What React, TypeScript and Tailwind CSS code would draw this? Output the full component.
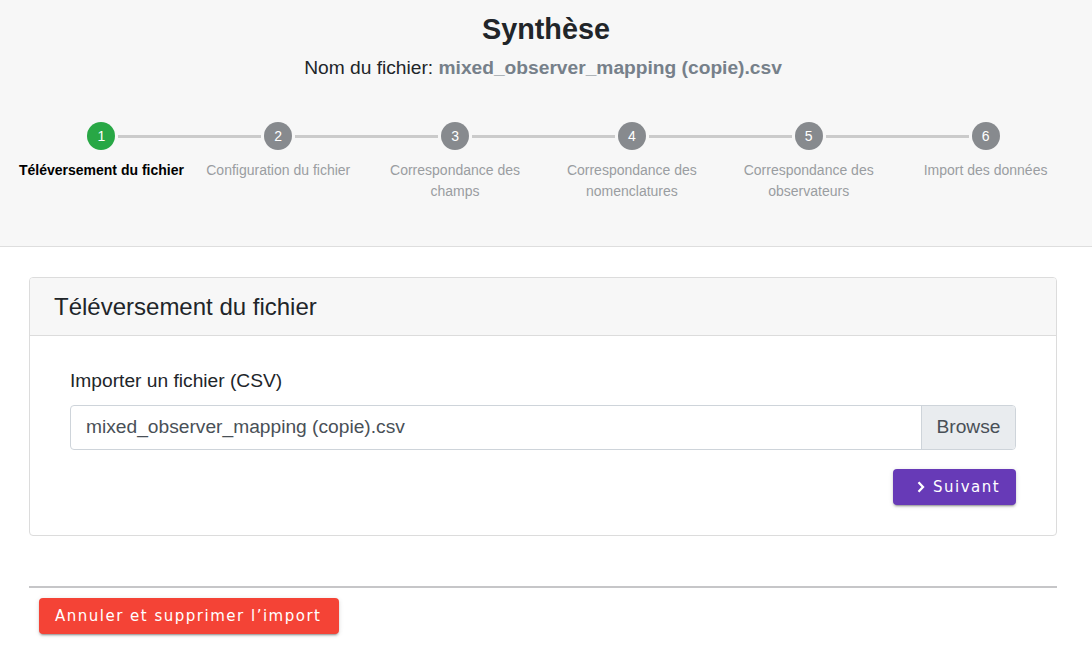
import React from "react";

const steps = [
  "Téléversement du fichier",
  "Configuration du fichier",
  "Correspondance des champs",
  "Correspondance des nomenclatures",
  "Correspondance des observateurs",
  "Import des données",
];

export default function App() {
  return (
    <div className="min-h-[658px] bg-white text-[#212529] [font-family:'Liberation_Sans',Arial,sans-serif]">
      <div className="bg-[#f7f7f7] border-b border-[#dedede] h-[247px] pt-[12px]">
        <h1 className="text-center font-bold text-[28.8px] leading-[1.2]">Synthèse</h1>
        <p className="text-center text-[19.2px] leading-[1.5] mt-[7px] pr-[6px]">
          Nom du fichier: <span className="font-bold text-[#76808a]">mixed_observer_mapping (copie).csv</span>
        </p>
        <div className="ml-[13px] w-[1061px] flex mt-[40px]">
          {steps.map((s, i) => (
            <div key={i} className="flex-1 flex flex-col items-center relative">
              {i > 0 && (
                <div className="absolute top-[12.5px] right-[calc(50%+17px)] left-[calc(-50%+17px)] h-[3px] bg-[#cbcbcb]" />
              )}
              <div
                className={
                  "w-[28px] h-[28px] rounded-full flex items-center justify-center text-white text-[14px] " +
                  (i === 0 ? "bg-[#28a745]" : "bg-[#878a8e]")
                }
              >
                {i + 1}
              </div>
              <div
                className={
                  "mt-[10px] text-center text-[14px] leading-[21px] max-w-[170px] " +
                  (i === 0 ? "font-bold text-black" : "text-[#9a9da1]")
                }
              >
                {s}
              </div>
            </div>
          ))}
        </div>
      </div>

      <div className="ml-[29px] w-[1028px] mt-[30px] border border-[#dcdcdc] rounded-[4px] overflow-hidden">
        <div className="h-[58px] bg-[#f7f7f7] border-b border-[#dcdcdc] flex items-center px-[24px] pt-[1px]">
          <h2 className="text-[24px] leading-[1.2] text-[#212529]">Téléversement du fichier</h2>
        </div>
        <div className="px-[40px] pt-[31px] pb-[30px]">
          <label className="block text-[19.2px] leading-[1.5] text-[#212529]">Importer un fichier (CSV)</label>
          <div className="mt-[9px] flex h-[45px] border border-[#ced4da] rounded-[4px] overflow-hidden">
            <div className="flex-1 flex items-center px-[15px] pt-[1px] text-[19.2px] text-[#495057]">
              mixed_observer_mapping (copie).csv
            </div>
            <div className="w-[94px] bg-[#e9ecef] border-l border-[#ced4da] flex items-center justify-center pt-[1px] text-[19.2px] text-[#495057]">
              Browse
            </div>
          </div>
          <div className="flex justify-end mt-[19px]">
            <button className="h-[36px] w-[123px] rounded-[4px] bg-[#673ab7] text-white flex items-center pl-[24px] pt-[1px] shadow-[0_3px_1px_-2px_rgba(0,0,0,0.2),0_2px_2px_0_rgba(0,0,0,0.14),0_1px_5px_0_rgba(0,0,0,0.12)] [font-family:'DejaVu_Sans',sans-serif] text-[15px] tracking-[1.5px]">
              <svg width="8" height="12" viewBox="0 0 8 12" fill="none">
                <path d="M1.5 1.2 L6 6 L1.5 10.8" stroke="white" strokeWidth="2.3" />
              </svg>
              <span className="ml-[8px]">Suivant</span>
            </button>
          </div>
        </div>
      </div>

      <div className="ml-[29px] w-[1028px] mt-[50px] h-[2px] bg-[#c6c6c8]" />
      <div className="ml-[39px] mt-[10px]">
        <button className="h-[36px] w-[300px] rounded-[4px] bg-[#f44336] text-white flex items-center pl-[16px] pt-[1px] shadow-[0_3px_1px_-2px_rgba(0,0,0,0.2),0_2px_2px_0_rgba(0,0,0,0.14),0_1px_5px_0_rgba(0,0,0,0.12)] [font-family:'DejaVu_Sans',sans-serif] text-[15px] tracking-[1.5px]">
          Annuler et supprimer l’import
        </button>
      </div>
    </div>
  );
}
